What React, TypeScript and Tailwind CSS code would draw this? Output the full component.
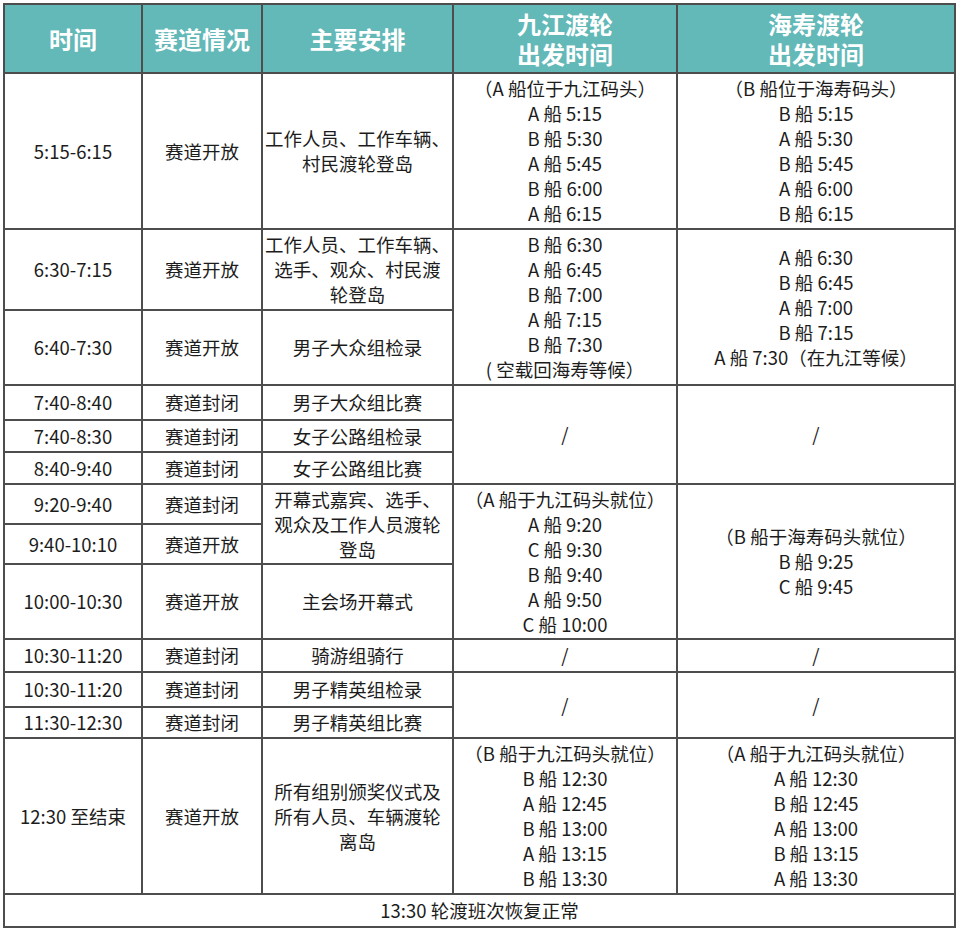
import React from "react";

const B = "border-2 border-[#4d4d4d]";
const td = `${B} text-center align-middle p-0 leading-[25px]`;

function Lines({ items }: { items: string[] }) {
  return (
    <>
      {items.map((t, i) => (
        <div key={i} className="whitespace-nowrap">
          {t}
        </div>
      ))}
    </>
  );
}

export default function App() {
  return (
    <div
      className="bg-white w-[960px] h-[931px] pt-[3px] pl-[3px] text-[#1c1c1c]"
      style={{ fontFamily: '"Noto Sans CJK SC", "Noto Sans", sans-serif' }}
    >
      <table className="border-collapse table-fixed w-[951px] text-[18.5px]">
        <colgroup>
          <col className="w-[138px]" />
          <col className="w-[120px]" />
          <col className="w-[191px]" />
          <col className="w-[224px]" />
          <col className="w-[278px]" />
        </colgroup>
        <thead>
          <tr className="h-[69px] bg-[#63b8b8] text-white font-bold text-[24px] leading-[30px]">
            <th className={`${B} align-middle`}>时间</th>
            <th className={`${B} align-middle`}>赛道情况</th>
            <th className={`${B} align-middle`}>主要安排</th>
            <th className={`${B} align-middle`}>
              九江渡轮
              <br />
              出发时间
            </th>
            <th className={`${B} align-middle`}>
              海寿渡轮
              <br />
              出发时间
            </th>
          </tr>
        </thead>
        <tbody>
          <tr className="h-[156px]">
            <td className={td}>5:15-6:15</td>
            <td className={td}>赛道开放</td>
            <td className={`${td} leading-[23px]`}>
              工作人员、工作车辆、
              <br />
              村民渡轮登岛
            </td>
            <td className={td}>
              <Lines items={["（A 船位于九江码头）", "A 船 5:15", "B 船 5:30", "A 船 5:45", "B 船 6:00", "A 船 6:15"]} />
            </td>
            <td className={td}>
              <Lines items={["（B 船位于海寿码头）", "B 船 5:15", "A 船 5:30", "B 船 5:45", "A 船 6:00", "B 船 6:15"]} />
            </td>
          </tr>
          <tr className="h-[81px]">
            <td className={td}>6:30-7:15</td>
            <td className={td}>赛道开放</td>
            <td className={`${td} leading-[24.5px]`}>
              工作人员、工作车辆、
              <br />
              选手、观众、村民渡
              <br />
              轮登岛
            </td>
            <td className={td} rowSpan={2}>
              <Lines items={["B 船 6:30", "A 船 6:45", "B 船 7:00", "A 船 7:15", "B 船 7:30", "( 空载回海寿等候）"]} />
            </td>
            <td className={td} rowSpan={2}>
              <Lines items={["A 船 6:30", "B 船 6:45", "A 船 7:00", "B 船 7:15", "A 船 7:30（在九江等候）"]} />
            </td>
          </tr>
          <tr className="h-[75px]">
            <td className={td}>6:40-7:30</td>
            <td className={td}>赛道开放</td>
            <td className={td}>男子大众组检录</td>
          </tr>
          <tr className="h-[35px]">
            <td className={td}>7:40-8:40</td>
            <td className={td}>赛道封闭</td>
            <td className={td}>男子大众组比赛</td>
            <td className={td} rowSpan={3}>/</td>
            <td className={td} rowSpan={3}>/</td>
          </tr>
          <tr className="h-[32px]">
            <td className={td}>7:40-8:30</td>
            <td className={td}>赛道封闭</td>
            <td className={td}>女子公路组检录</td>
          </tr>
          <tr className="h-[32px]">
            <td className={td}>8:40-9:40</td>
            <td className={td}>赛道封闭</td>
            <td className={td}>女子公路组比赛</td>
          </tr>
          <tr className="h-[40px]">
            <td className={td}>9:20-9:40</td>
            <td className={td}>赛道封闭</td>
            <td className={`${td} leading-[24px]`} rowSpan={2}>
              开幕式嘉宾、选手、
              <br />
              观众及工作人员渡轮
              <br />
              登岛
            </td>
            <td className={td} rowSpan={3}>
              <Lines items={["（A 船于九江码头就位）", "A 船 9:20", "C 船 9:30", "B 船 9:40", "A 船 9:50", "C 船 10:00"]} />
            </td>
            <td className={td} rowSpan={3}>
              <Lines items={["（B 船于海寿码头就位）", "B 船 9:25", "C 船 9:45"]} />
            </td>
          </tr>
          <tr className="h-[40px]">
            <td className={td}>9:40-10:10</td>
            <td className={td}>赛道开放</td>
          </tr>
          <tr className="h-[75px]">
            <td className={td}>10:00-10:30</td>
            <td className={td}>赛道开放</td>
            <td className={td}>主会场开幕式</td>
          </tr>
          <tr className="h-[33px]">
            <td className={td}>10:30-11:20</td>
            <td className={td}>赛道封闭</td>
            <td className={td}>骑游组骑行</td>
            <td className={td}>/</td>
            <td className={td}>/</td>
          </tr>
          <tr className="h-[35px]">
            <td className={td}>10:30-11:20</td>
            <td className={td}>赛道封闭</td>
            <td className={td}>男子精英组检录</td>
            <td className={td} rowSpan={2}>/</td>
            <td className={td} rowSpan={2}>/</td>
          </tr>
          <tr className="h-[31px]">
            <td className={td}>11:30-12:30</td>
            <td className={td}>赛道封闭</td>
            <td className={td}>男子精英组比赛</td>
          </tr>
          <tr className="h-[156px]">
            <td className={td}>12:30 至结束</td>
            <td className={td}>赛道开放</td>
            <td className={`${td} leading-[24px]`}>
              所有组别颁奖仪式及
              <br />
              所有人员、车辆渡轮
              <br />
              离岛
            </td>
            <td className={td}>
              <Lines items={["（B 船于九江码头就位）", "B 船 12:30", "A 船 12:45", "B 船 13:00", "A 船 13:15", "B 船 13:30"]} />
            </td>
            <td className={td}>
              <Lines items={["（A 船于九江码头就位）", "A 船 12:30", "B 船 12:45", "A 船 13:00", "B 船 13:15", "A 船 13:30"]} />
            </td>
          </tr>
          <tr className="h-[33px]">
            <td className={td} colSpan={5}>
              13:30 轮渡班次恢复正常
            </td>
          </tr>
        </tbody>
      </table>
    </div>
  );
}
